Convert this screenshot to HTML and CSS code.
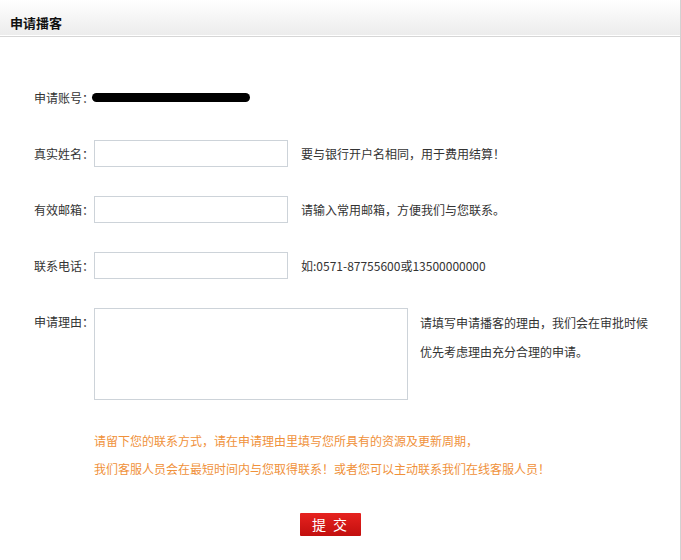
FILE: index.html
```html
<!DOCTYPE html>
<html lang="zh-CN">
<head>
<meta charset="utf-8">
<title>申请播客</title>
<link rel="stylesheet" href="styles.css">
</head>
<body>
<div class="panel">
  <div class="head-wrap">
    <div class="head">申请播客</div>
  </div>
  <form class="form">
    <div class="row">
      <span class="label">申请账号：</span>
      <span class="account"><span class="redact"></span></span>
    </div>
    <div class="row">
      <span class="label">真实姓名：</span>
      <input class="input" type="text">
      <span class="hint">要与银行开户名相同，用于费用结算！</span>
    </div>
    <div class="row">
      <span class="label">有效邮箱：</span>
      <input class="input" type="text">
      <span class="hint">请输入常用邮箱，方便我们与您联系。</span>
    </div>
    <div class="row">
      <span class="label">联系电话：</span>
      <input class="input" type="text">
      <span class="hint">如:0571-87755600或13500000000</span>
    </div>
    <div class="row row-top">
      <span class="label">申请理由：</span>
      <textarea class="area"></textarea>
      <span class="hint hint-wide">请填写申请播客的理由，我们会在审批时候优先考虑理由充分合理的申请。</span>
    </div>
    <div class="note">
      <p>请留下您的联系方式，请在申请理由里填写您所具有的资源及更新周期，</p>
      <p>我们客服人员会在最短时间内与您取得联系！或者您可以主动联系我们在线客服人员！</p>
    </div>
    <div class="actions">
      <button class="submit" type="button">提 交</button>
    </div>
  </form>
</div>
</body>
</html>
```

FILE: styles.css
```css
html, body {
  margin: 0;
  padding: 0;
  background: #fff;
}
body {
  font-family: "Noto Sans CJK SC", "Liberation Sans", sans-serif;
  font-size: 12px;
  color: #333;
}
.panel {
  width: 680px;
  height: 560px;
  border-right: 1px solid #d2d2d2;
}
.head-wrap {
  border-bottom: 1px solid #d6d6d6;
}
.head {
  height: 25px;
  padding: 10px 0 0 10px;
  line-height: 26px;
  font-size: 13px;
  font-weight: bold;
  color: #111;
  background: linear-gradient(#ffffff, #ececec);
  border-bottom: 1px solid #fff;
}
.form {
  margin: 0;
  padding: 47px 0 0 34px;
  display: flex;
  flex-direction: column;
  gap: 29px;
}
.row {
  display: flex;
  align-items: center;
  height: 27px;
}
.row-top {
  align-items: flex-start;
  height: 92px;
}
.label {
  width: 60px;
  line-height: 27px;
  white-space: nowrap;
}
.account {
  display: flex;
  align-items: center;
  height: 27px;
}
.redact {
  display: block;
  width: 158px;
  height: 9px;
  margin-left: -2px;
  margin-top: -1px;
  background: #000;
  border-radius: 5px;
}
.input {
  box-sizing: border-box;
  width: 194px;
  height: 27px;
  margin: 0;
  border: 1px solid #cdd3d9;
  background: #fff;
  padding: 0 4px;
  font: inherit;
}
.hint {
  margin-left: 13px;
  white-space: nowrap;
}
.area {
  box-sizing: border-box;
  width: 314px;
  height: 92px;
  margin: 0;
  border: 1px solid #cdd3d9;
  resize: none;
  font: inherit;
}
.hint-wide {
  margin-left: 12px;
  width: 232px;
  white-space: normal;
  line-height: 29px;
}
.note {
  margin: -2px 0 0 60px;
  color: #f0913a;
}
.note p {
  margin: 0;
  line-height: 28px;
}
.actions {
  margin: 1px 0 0 266px;
}
.submit {
  display: block;
  width: 61px;
  height: 23px;
  padding: 0;
  border: 0;
  border-radius: 1px;
  background: linear-gradient(#e6221f, #c20f0e);
  color: #fff;
  font-family: "Noto Sans CJK SC", sans-serif;
  font-size: 14px;
  letter-spacing: 2px;
  line-height: 23px;
  cursor: pointer;
}
```
